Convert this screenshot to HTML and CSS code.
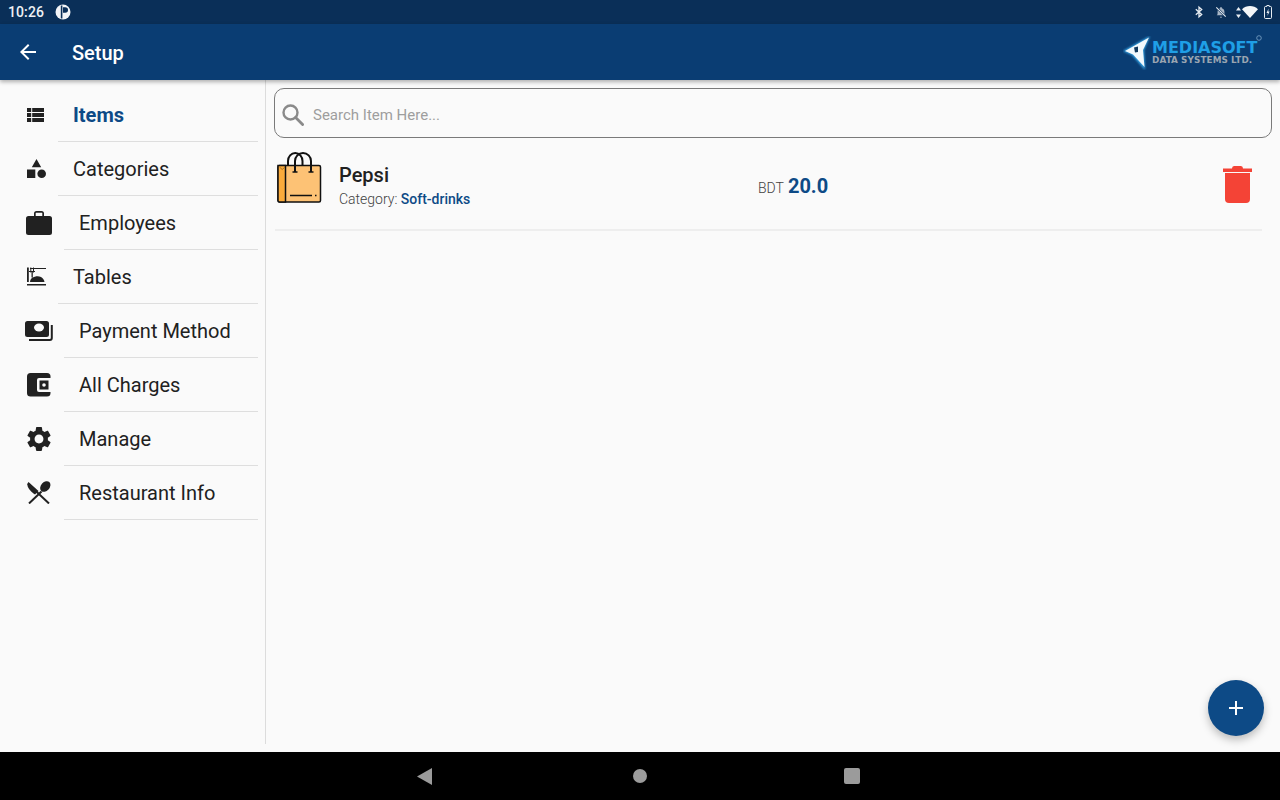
FILE: index.html
```html
<!DOCTYPE html>
<html lang="en">
<head>
<meta charset="utf-8">
<title>Setup</title>
<link rel="stylesheet" href="styles.css">
</head>
<body>
<div class="screen">
  <header class="status-bar">
    <div class="status-left">
      <span class="clock">10:26</span>
      <svg class="status-app" width="16" height="16" viewBox="0 0 16 16"><circle cx="8" cy="8" r="7.5" fill="#f2f4f7"/><path d="M6.6 1.5v13" stroke="#0a2f58" stroke-width="1.6"/><path d="M8 3.2h2.2a2.6 2.6 0 0 1 0 5.6H8z" fill="#0a2f58"/></svg>
    </div>
    <div class="status-right">
      <svg class="s-bt" width="8" height="14" viewBox="0 0 10 14"><path d="M1 3.6l7.4 6.6L5 13V1l3.4 2.8L1 10.4" fill="none" stroke="#e8edf2" stroke-width="1.6"/></svg>
      <svg class="s-bell" width="12" height="14" viewBox="0 0 14 14"><path d="M7 1.2a1 1 0 0 1 1 1v.4c1.900.5 3 2.100 3 4v3l1 1.200H2l1-1.200v-3c0-1.900 1.100-3.500 3-4v-.4a1 1 0 0 1 1-1zM5.700 12.400h2.600a1.300 1.300 0 0 1-2.600 0z" fill="#aab7c6"/><path d="M1.500 1.500l11 11" stroke="#0a2f58" stroke-width="2.400"/><path d="M1.500 1.500l11 11" stroke="#e8edf2" stroke-width="1.200"/></svg>
      <svg class="s-data" width="5" height="13" viewBox="0 0 6 13"><path d="M3 0l3 4H0zM3 13L0 9h6z" fill="#e8edf2"/></svg>
      <svg class="s-wifi" width="16" height="12" viewBox="0 0 16 12"><path d="M8 12L0 3.200C2.200 1.200 5 0 8 0s5.800 1.200 8 3.200z" fill="#f4f6f8"/></svg>
      <svg class="s-batt" width="8" height="14" viewBox="0 0 8 14"><path d="M2.800.5h2.400v1h1.500c.4 0 .8.400.8.800v10.400c0 .4-.4.800-.8.800H1.300c-.4 0-.8-.4-.8-.8V2.300c0-.4.400-.8.800-.8h1.500z" fill="none" stroke="#e8edf2" stroke-width="1"/><path d="M4.600 3.500L2.500 8h1.400l-.5 3L5.600 6.500H4.200z" fill="#e8edf2"/></svg>
    </div>
  </header>

  <header class="app-bar">
    <svg class="back" width="16" height="16" viewBox="0 0 16 16"><path d="M16 7H3.800l5.600-5.600L8 0 0 8l8 8 1.400-1.400L3.800 9H16z" fill="#fff"/></svg>
    <h1 class="title">Setup</h1>
    <div class="logo">
      <svg class="logo-mark" width="29" height="34" viewBox="0 0 29 34"><defs><filter id="glow" x="-30%" y="-30%" width="160%" height="160%"><feGaussianBlur stdDeviation="0.8"/></filter></defs><path d="M27 0L0 15l9 4 13 15-1-20z" fill="#39a9ea" filter="url(#glow)"/><path d="M26 1.500L2 15l8 3.500L21.500 31 20 14z" fill="#f2f8fc"/><path d="M11 11.500l4-1v5.500l-3 .5z" fill="#123a5e"/></svg>
      <div class="logo-text">
        <span class="logo-name">MEDIASOFT</span>
        <span class="logo-sub">DATA SYSTEMS LTD.</span>
      </div>
      <svg class="logo-reg" width="6" height="6" viewBox="0 0 6 6"><circle cx="3" cy="3" r="2.300" fill="none" stroke="#7fa6c8" stroke-width=".8"/></svg>
    </div>
  </header>

  <main class="content">
    <nav class="sidebar">
      <a class="nav-item">
        <span class="nav-icon"><svg class="i-list" width="17" height="14" viewBox="0 0 17 14"><path d="M0 0h4.200v4H0zM5.200 0H17v4H5.200zM0 5h4.200v4H0zM5.200 5H17v4H5.200zM0 10h4.200v4H0zM5.200 10H17v4H5.200z" fill="#212121"/></svg></span>
        <span class="nav-label active">Items</span>
      </a>
      <a class="nav-item">
        <span class="nav-icon"><svg class="i-list" width="19" height="19" viewBox="0 0 19 19"><path d="M9.500 0l4.700 8.300H4.800zM0 10.500h8.300V19H0z" fill="#212121"/><circle cx="14.700" cy="14.700" r="4.300" fill="#212121"/></svg></span>
        <span class="nav-label">Categories</span>
      </a>
      <a class="nav-item">
        <span class="nav-icon wide"><svg width="26" height="24" viewBox="0 0 26 24"><path d="M8 5V2.500A2.500 2.500 0 0 1 10.500 0h5A2.500 2.500 0 0 1 18 2.500V5h5.500A2.500 2.500 0 0 1 26 7.500v14a2.500 2.500 0 0 1-2.500 2.500h-21A2.500 2.500 0 0 1 0 21.500v-14A2.500 2.500 0 0 1 2.500 5zm1.700 0h6.600V2.100a.4.400 0 0 0-.4-.4H10.100a.4.400 0 0 0-.4.400z" fill="#212121"/></svg></span>
        <span class="nav-label">Employees</span>
      </a>
      <a class="nav-item">
        <span class="nav-icon"><svg class="i-list" width="19" height="19" viewBox="0 0 19 19"><path d="M0 .5h1.800V15H0zM0 17h19v1.600H0zM3 1h16v1H3zM2 4h6v1H2zM3.300 .5h1v5h-1zM6 .5h1v5H6z" fill="#212121"/><path d="M4.500 5h1.300v5.500H4.500zM3 15c.2-2.500 1.500-4 3-4.500 1.500-1 5-2 8-.5 2 1 3.300 3 3.500 5z" fill="#212121"/></svg></span>
        <span class="nav-label">Tables</span>
      </a>
      <a class="nav-item">
        <span class="nav-icon wide"><svg class="i-pay" width="28" height="20" viewBox="0 0 28 20"><path d="M2.500 0h19A2.500 2.500 0 0 1 24 2.500v11a2.500 2.500 0 0 1-2.500 2.500h-19A2.500 2.500 0 0 1 0 13.500v-11A2.500 2.500 0 0 1 2.500 0z" fill="#212121"/><ellipse cx="14" cy="6.500" rx="5" ry="4" fill="#fafafa"/><path d="M26.800 4v13a2 2 0 0 1-2 2H4" fill="none" stroke="#212121" stroke-width="2"/></svg></span>
        <span class="nav-label">Payment Method</span>
      </a>
      <a class="nav-item">
        <span class="nav-icon wide"><svg class="i-wallet" width="24" height="24" viewBox="0 0 24 24"><rect width="23.500" height="23.500" rx="3.500" fill="#212121"/><path d="M10 7a2 2 0 0 1 2-2h12v14H12a2 2 0 0 1-2-2z" fill="#fafafa"/><rect x="12.500" y="7.500" width="9" height="9" fill="#212121"/><circle cx="17" cy="12" r="1.800" fill="#fafafa"/></svg></span>
        <span class="nav-label">All Charges</span>
      </a>
      <a class="nav-item">
        <span class="nav-icon wide"><svg class="i-wallet" width="24" height="24" viewBox="2.300 2.300 19.400 19.400"><path d="M19.140 12.940c.04-.3.060-.61.060-.94 0-.32-.02-.64-.07-.94l2.030-1.580c.18-.14.23-.41.120-.61l-1.920-3.320c-.12-.22-.37-.29-.59-.22l-2.390.96c-.5-.38-1.030-.7-1.620-.94L14.400 2.810c-.04-.24-.24-.41-.48-.41h-3.840c-.24 0-.43.17-.47.41L9.250 5.350c-.59.24-1.130.57-1.620.94l-2.390-.96c-.22-.08-.47 0-.59.22L2.740 8.870c-.12.210-.08.470.12.610l2.030 1.580c-.05.3-.09.630-.09.940s.02.640.07.940l-2.030 1.580c-.18.140-.23.410-.12.610l1.920 3.320c.12.220.37.290.59.220l2.390-.96c.5.380 1.030.7 1.620.94l.36 2.540c.05.240.24.410.48.410h3.840c.24 0 .44-.17.470-.41l.36-2.540c.59-.24 1.130-.56 1.620-.94l2.390.96c.22.080.47 0 .59-.22l1.920-3.320c.12-.22.070-.47-.12-.61l-2.010-1.580zM12 15.600c-1.980 0-3.600-1.620-3.600-3.600s1.620-3.600 3.600-3.600 3.600 1.620 3.600 3.600-1.620 3.600-3.600 3.600z" fill="#212121"/></svg></span>
        <span class="nav-label">Manage</span>
      </a>
      <a class="nav-item">
        <span class="nav-icon wide"><svg class="i-wallet" width="24" height="23" viewBox="0 0 24 23"><path d="M2 22.500L14.500 10.500" stroke="#212121" stroke-width="2"/><path d="M0.800 2.600L22 22.500" stroke="#212121" stroke-width="2"/><path d="M1.500 1l10 9-3.500 3.500C5 11.500 1 8 .500 4.500.300 3 .800 1.800 1.500 1z" fill="#212121"/><ellipse cx="18.300" cy="5.500" rx="4.300" ry="6" transform="rotate(42 18.300 5.500)" fill="#212121"/></svg></span>
        <span class="nav-label">Restaurant Info</span>
      </a>
    </nav>

    <section class="main-panel">
      <div class="search">
        <svg class="search-icon" width="22" height="22" viewBox="0 0 22 22"><circle cx="8.500" cy="8.500" r="7" fill="none" stroke="#8a8a8a" stroke-width="2.400"/><path d="M13.600 13.600l7 7" stroke="#8a8a8a" stroke-width="2.800" stroke-linecap="round"/></svg>
        <span class="search-placeholder">Search Item Here...</span>
      </div>
      <article class="item-row">
        <svg class="bag" width="45" height="52" viewBox="0 0 45 52">
          <rect x="1" y="13.500" width="42.500" height="36.500" rx="1.500" fill="#fdc275" stroke="#111" stroke-width="1.500"/>
          <path d="M1 13.500h7.500V50H2.500A1.500 1.500 0 0 1 1 48.500z" fill="#fbab3b" stroke="#111" stroke-width="1.500"/>
          <path d="M2.500 15l2.700 2.500L8 15" fill="none" stroke="#a8701f" stroke-width="1"/>
          <path d="M11 13.500V9a7.250 8 0 0 1 14.500 0v4.500" fill="none" stroke="#111" stroke-width="2"/>
          <path d="M18 20V9a8 8 0 0 1 16 0v11" fill="none" stroke="#111" stroke-width="2"/>
          <path d="M15.500 20h5M31.500 20h5M13 43.500h22M38 43.500h1.500" stroke="#111" stroke-width="1.500"/>
        </svg>
        <div class="item-info">
          <div class="item-name">Pepsi</div>
          <div class="item-cat">Category: <span class="item-cat-value">Soft-drinks</span></div>
        </div>
        <div class="item-price"><span class="currency">BDT</span> <span class="amount">20.0</span></div>
        <svg class="trash" width="29" height="37" viewBox="0 0 29 37"><path d="M9 2.500Q9 0 11 0h7q2 0 2 2.500H29V6H0V2.500z" fill="#f44336"/><path d="M2 7h25v26a4 4 0 0 1-4 4H6a4 4 0 0 1-4-4z" fill="#f44336"/></svg>
      </article>
    </section>

    <button class="fab" type="button" aria-label="Add"><svg width="14" height="14" viewBox="0 0 14 14"><path d="M0 7h14M7 0v14" stroke="#fff" stroke-width="2"/></svg></button>
  </main>

  <footer class="nav-bar">
    <svg class="nb-back" width="15" height="17" viewBox="0 0 15 17"><path d="M15 0v17L0 8.500z" fill="#9b9b9b"/></svg>
    <span class="nb-home"></span>
    <span class="nb-recent"></span>
  </footer>
</div>
</body>
</html>
```
FILE: styles.css
```css
* { box-sizing: border-box; }
html, body { margin: 0; padding: 0; }
body { font-family: Roboto, "Liberation Sans", sans-serif; background: #fafafa; color: #212121; }
.screen { width: 1280px; height: 800px; display: flex; flex-direction: column; overflow: hidden; position: relative; }

.status-bar { height: 24px; flex: none; background: #0a2f58; display: flex; align-items: center; justify-content: space-between; padding: 0 8px; color: #eef1f5; }
.status-left { display: flex; align-items: center; }
.clock { font-size: 14px; font-weight: 500; letter-spacing: 0.1px; }
.status-app { margin-left: 11px; }
.status-right { display: flex; align-items: center; }
.s-bell { margin-left: 12px; }
.s-data { margin-left: 9px; }
.s-wifi { margin-left: 1px; }
.s-batt { margin-left: 6px; }

.app-bar { height: 56px; flex: none; background: #0a3d73; display: flex; align-items: center; padding: 0 22px 0 20px; box-shadow: 0 2px 4px rgba(0,0,0,.3); position: relative; z-index: 2; }
.back { margin-top: 0; }
.title { margin: 1px 0 0 36px; font-size: 20px; font-weight: 500; color: #fff; flex: 1; line-height: 1; }
.logo { display: flex; align-items: center; position: relative; }
.logo-mark { margin-top: 1px; }
.logo-text { display: flex; flex-direction: column; width: 106px; }
.logo-name { font-family: "DejaVu Sans", sans-serif; font-weight: 700; font-size: 16px; line-height: 15px; color: #1f9fe6; white-space: nowrap; }
.logo-sub { font-family: "DejaVu Sans", sans-serif; font-weight: 700; font-size: 8.800px; line-height: 10px; letter-spacing: .1px; color: #9aa5b1; white-space: nowrap; }
.logo-reg { position: absolute; right: -4px; top: 0; }

.content { flex: 1; display: flex; position: relative; padding-bottom: 8px; min-height: 0; }
.sidebar { width: 266px; flex: none; border-right: 1px solid #dcdcdc; padding: 8px 7px 0 0; }
.nav-item { display: flex; height: 54px; align-items: stretch; }
.nav-icon { width: 58px; flex: none; display: flex; align-items: center; padding-left: 27px; }
.nav-icon.wide { width: 64px; padding-left: 26px; }
.i-list { margin-top: -1px; }
.i-pay { margin-left: -1px; margin-top: -1px; }
.i-wallet { margin-left: 1px; margin-top: -1px; }
.nav-label { flex: 1; display: flex; align-items: center; padding-left: 15px; font-size: 20px; border-bottom: 1px solid #dedede; color: #212121; }
.nav-label.active { color: #0d4a86; font-weight: 700; }

.main-panel { flex: 1; padding: 8px 8px 0 8px; min-width: 0; }
.search { height: 50px; border: 1px solid #7a7a7a; border-radius: 10px; display: flex; align-items: center; padding: 4px 0 0 7px; }
.search-placeholder { margin-left: 9px; font-size: 15px; color: #9e9e9e; }

.item-row { display: flex; align-items: flex-start; height: 93px; margin: 0 10px 0 1px; border-bottom: 2px solid #eeeeee; position: relative; padding-top: 14px; }
.bag { flex: none; margin-left: 2px; }
.item-info { margin-left: 17px; width: 419px; padding-top: 11px; flex: none; }
.item-name { font-size: 20px; font-weight: 500; line-height: 24px; color: #212121; }
.item-cat { font-size: 14px; font-weight: 300; line-height: 16px; margin-top: 4px; color: #424242; }
.item-cat-value { color: #0d4a86; font-weight: 500; }
.item-price { padding-top: 21px; line-height: 26px; white-space: nowrap; flex: 1; }
.currency { font-size: 14px; font-weight: 300; color: #424242; }
.amount { font-size: 20px; font-weight: 700; color: #0d4a86; }
.trash { flex: none; margin: 14px 10px 0 0; }

.fab { position: absolute; right: 16px; bottom: 16px; width: 56px; height: 56px; border: 0; padding: 0; border-radius: 50%; background: #0d4a86; display: flex; align-items: center; justify-content: center; box-shadow: 0 4px 8px rgba(0,0,0,.25); }

.nav-bar { height: 48px; flex: none; background: #000; display: flex; align-items: center; padding-left: 417px; }
.nb-back { flex: none; }
.nb-home { width: 14px; height: 14px; border-radius: 50%; background: #9b9b9b; margin-left: 201px; }
.nb-recent { width: 16px; height: 16px; border-radius: 2px; background: #9b9b9b; margin-left: 197px; }
```
